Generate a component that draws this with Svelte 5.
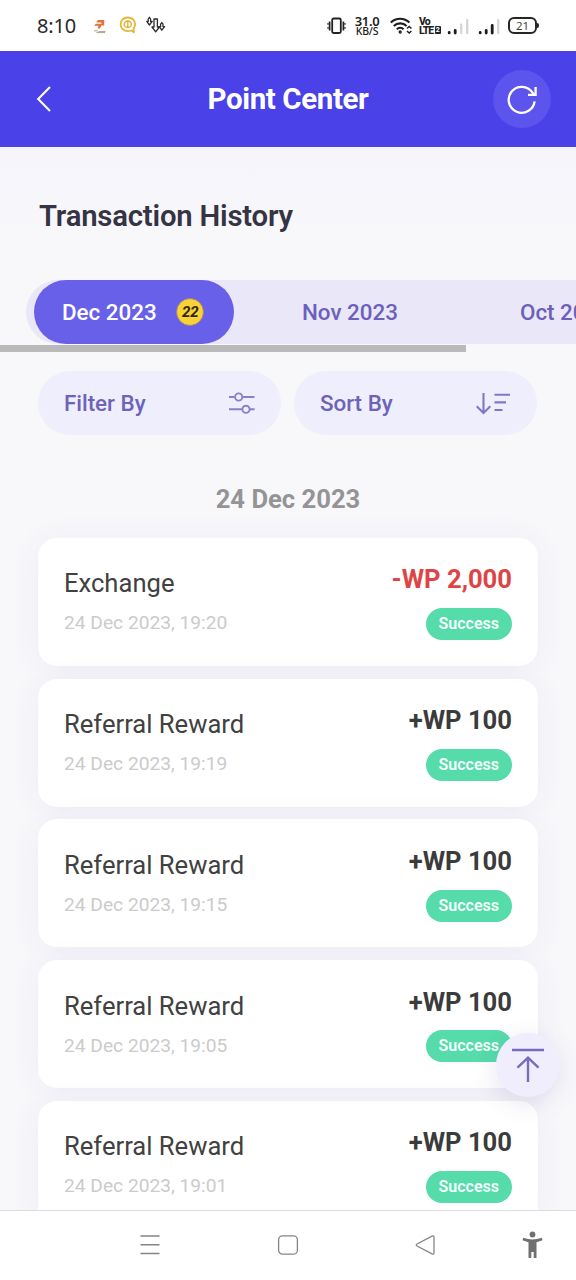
<script>
  const months = [
    { label: 'Dec 2023', count: 22, active: true },
    { label: 'Nov 2023' },
    { label: 'Oct 2023' }
  ];
  const transactions = [
    { name: 'Exchange', time: '24 Dec 2023, 19:20', amount: '-WP 2,000', debit: true },
    { name: 'Referral Reward', time: '24 Dec 2023, 19:19', amount: '+WP 100' },
    { name: 'Referral Reward', time: '24 Dec 2023, 19:15', amount: '+WP 100' },
    { name: 'Referral Reward', time: '24 Dec 2023, 19:05', amount: '+WP 100' },
    { name: 'Referral Reward', time: '24 Dec 2023, 19:01', amount: '+WP 100' }
  ];
</script>

<div class="screen">
  <div class="status">
    <div class="status-left">
      <span class="clock">8:10</span>
      <svg class="app-note" width="14" height="16" viewBox="0 0 14 16">
        <path d="M3.6 2.6 5 1h6.2v5.6H8.6L6.8 9.6H4.6l.8-2.8H1.2l1.4-2h5.8V3.4H3.6z" fill="#e0763d" />
        <path d="M1.2 11.8h3.6M5.5 12.6h7M3.5 13.6h8.5" stroke="#b39f8b" stroke-width="1" fill="none" />
      </svg>
      <svg class="chat" width="18" height="18" viewBox="0 0 18 18">
        <path d="M12.6 14.5Q11 15.2 8.8 15.2C4.6 15.2 1.6 12.2 1.6 8.3S4.6 1.5 8.8 1.5s7.3 2.9 7.3 6.8q0 2-1.3 3.8v4.2z" fill="none" stroke="#e6b532" stroke-width="1.8" stroke-linejoin="round" />
        <ellipse cx="8.8" cy="8.2" rx="3.6" ry="3.2" fill="none" stroke="#e2ac2c" stroke-width="1.4" />
        <path d="M8.8 5v6.4" stroke="#e2ac2c" stroke-width="1.3" />
      </svg>
      <svg class="arrows" width="20" height="18" viewBox="0 0 20 18" fill="#fff" stroke="#2c2c2c" stroke-width="1.3" stroke-linejoin="round">
        <path d="M8 3h3.4v8h2L9.7 15.8 6 11h2z" />
        <path d="M2.2 5.4V3L3.4 1.3 4.6 3v2.4h1.6L3.4 9 .8 5.4z" />
        <path d="M14.6 10.6V8.2l1.2-1.7L17 8.2v2.4h1.6l-2.8 3.6-2.6-3.6z" />
      </svg>
    </div>
    <div class="status-right">
      <svg class="vibrate" width="19" height="18" viewBox="0 0 19 18" fill="none" stroke="#222">
        <rect x="5.2" y="1.5" width="8.6" height="14.5" rx="1.5" stroke-width="1.8" />
        <path d="M2.6 4.5v9M16.4 4.5v9" stroke-width="1.7" />
        <path d="M1 6v1.8M1 10v1.8M18 6v1.8M18 10v1.8" stroke-width="1.2" />
      </svg>
      <span class="speed"><b>31.0</b><small>KB/S</small></span>
      <svg class="wifi" width="24" height="18" viewBox="0 0 24 18" fill="none" stroke="#1c1c1c" stroke-width="2.1">
        <path d="M.8 5.6a13.2 13.2 0 0 1 18.6 0M3.8 9a9 9 0 0 1 12.8 0M6.8 12.2a5 5 0 0 1 6.8 0" />
        <circle cx="10.2" cy="15" r="1" stroke-width="1.3" />
        <path d="m17 11.6 2.2-2.1 2.2 2.1M17 14l2.2 2.1 2.2-2.1" stroke-width="1.4" />
      </svg>
      <span class="volte"><b>Vo</b><b>LTE<i>2</i></b></span>
      <svg class="bars" width="22" height="18" viewBox="0 0 22 18" stroke-width="2.8" stroke-linecap="round">
        <path d="M2.2 14.5v.4M8.2 12.3v2.8" stroke="#1c1c1c" />
        <path d="M14.2 6.8v8.3M20.2 2.3v12.8" stroke="#d6d6d6" stroke-width="2.4" />
      </svg>
      <svg class="bars last" width="22" height="18" viewBox="0 0 22 18" stroke-width="2.8" stroke-linecap="round">
        <path d="M2.2 14.5v.4M8.2 12.3v2.8M14.2 7.3v7.8" stroke="#1c1c1c" />
        <path d="M20.2 2.3v12.8" stroke="#d6d6d6" stroke-width="2.4" />
      </svg>
      <span class="battery">21</span>
    </div>
  </div>

  <header>
    <svg class="back" width="16" height="28" viewBox="0 0 16 28" fill="none" stroke="#fff" stroke-width="2.1">
      <path d="M14 2 2.2 14 14 26" />
    </svg>
    <h1>Point Center</h1>
    <button class="refresh" aria-label="Refresh">
      <svg width="32" height="32" viewBox="0 0 32 32" fill="none" stroke="#fff" stroke-width="2.3">
        <path d="M28.6 18.4A13 13 0 1 1 26.4 9.4l1.4 1.8" />
        <path d="M22 11.8h7.6V4" />
      </svg>
    </button>
  </header>

  <main>
    <h2>Transaction History</h2>

    <div class="months">
      {#each months as month}
        <div class="month" class:active={month.active}>
          <span>{month.label}</span>
          {#if month.count}<em>{month.count}</em>{/if}
        </div>
      {/each}
    </div>
    <div class="scrollbar"></div>

    <div class="controls">
      <button>
        <span>Filter By</span>
        <svg width="28" height="26" viewBox="0 0 28 26" fill="none" stroke="#8980c8" stroke-width="1.9">
          <path d="M1 7h5.5M14.5 7h12M1 19.3h13M21.6 19.3h5" />
          <circle cx="10.7" cy="7" r="3.6" /><circle cx="18" cy="19.3" r="3.6" />
        </svg>
      </button>
      <button>
        <span>Sort By</span>
        <svg width="36" height="26" viewBox="0 0 36 26" fill="none" stroke="#8178c5" stroke-width="2.1">
          <path d="M7.5 3v20M.7 16.3l6.8 6.7 6.8-6.7M18.5 4.7H34M18.5 12.4H30M18.5 20H26.5" />
        </svg>
      </button>
    </div>

    <h3>24 Dec 2023</h3>

    <div class="list">
      {#each transactions as item}
        <article>
          <div class="detail">
            <span class="name">{item.name}</span>
            <span class="time">{item.time}</span>
          </div>
          <div class="result">
            <strong class:debit={item.debit}>{item.amount}</strong>
            <span class="badge">Success</span>
          </div>
        </article>
      {/each}
    </div>
  </main>

  <button class="to-top" aria-label="Back to top">
    <svg width="34" height="36" viewBox="0 0 34 36" fill="none" stroke="#776abf" stroke-width="2.4">
      <path d="M1 3h32M17 35V11M6.5 20.7 17 10.7l10.5 10" />
    </svg>
  </button>

  <nav>
    <svg width="22" height="22" viewBox="0 0 22 22" stroke="#858585" stroke-width="1.4"><path d="M1.5 2h19M1.5 10.8h19M1.5 19.5h19" /></svg>
    <svg width="22" height="22" viewBox="0 0 22 22" fill="none" stroke="#858585" stroke-width="1.3"><rect x="1.6" y="1.8" width="18.8" height="18.4" rx="4" /></svg>
    <svg width="22" height="22" viewBox="0 0 22 22" fill="none" stroke="#858585" stroke-width="1.3"><path d="M17.1 2.1Q19 1.3 19 3.5v15q0 2.2-1.9 1.4L2 12Q.5 10.9 2 10z" /></svg>
    <svg class="person" width="22" height="28" viewBox="0 0 22 28" fill="#707070">
      <circle cx="10.5" cy="3.5" r="2.9" />
      <path d="M1.2 6.8Q10.5 10 19.8 6.8l.7 2.4-6 2V27h-2.8v-6H9.3v6H6.5V11.2l-6-2z" />
    </svg>
  </nav>
</div>

<style>
  :global(body) { margin: 0; overflow: hidden; }
  * { box-sizing: border-box; }
  .screen {
    position: relative; width: 576px; height: 1280px; overflow: hidden;
    display: flex; flex-direction: column;
    background: #f8f8fb; font-family: Roboto, sans-serif;
  }
  svg { flex: none; display: block; }
  button { border: 0; margin: 0; padding: 0; font: inherit; }
  h1, h2, h3 { margin: 0; }

  .status { height: 51px; flex: none; background: #fff; display: flex; justify-content: space-between; padding: 0 37px; }
  .status-left, .status-right { display: flex; align-items: center; }
  .clock { font: 20px/50px "Noto Sans", sans-serif; color: #282828; width: 56px; letter-spacing: -.2px; white-space: nowrap; }
  .app-note { margin-top: 2px; }
  .chat { margin-left: 12px; margin-top: -1px; }
  .arrows { margin-left: 9px; margin-top: -2px; }
  .speed { display: flex; flex-direction: column; align-items: center; width: 26px; margin-left: 8px; margin-top: 1px; font-family: "Noto Sans", sans-serif; color: #222; white-space: nowrap; }
  .speed b { font-size: 13px; line-height: 10px; font-weight: 600; letter-spacing: -.3px; }
  .speed small { font-size: 10.5px; line-height: 10px; font-weight: 500; letter-spacing: -.2px; }
  .wifi { margin-left: 10px; }
  .volte { display: flex; flex-direction: column; width: 21px; margin-left: 5px; color: #222; font-family: Roboto, sans-serif; font-size: 10.5px; line-height: 9px; letter-spacing: -.9px; }
  .volte b { display: flex; align-items: center; height: 9px; font-weight: 800; }
  .volte i { font-style: normal; font-size: 7px; line-height: 8px; letter-spacing: 0; background: #222; color: #fff; padding: 0 1px; margin-left: 1.5px; border-radius: 1px; height: 8px; }
  .bars { margin-left: 7px; margin-top: 2px; }
  .bars.last { margin-left: 9px; }
  .battery {
    position: relative; width: 29px; height: 17px; margin: 0 2px 0 8px; border: 2px solid #262626; border-radius: 6px;
    font: 11.5px/13px "Noto Sans", sans-serif; color: #444; text-align: center;
  }
  .battery::after { content: ""; position: absolute; right: -4px; top: 4px; width: 2px; height: 5px; background: #262626; border-radius: 0 2px 2px 0; }

  header { height: 96px; flex: none; background: #4a41e9; display: grid; grid-template-columns: 58px 1fr 58px; align-items: center; padding: 0 25px 0 25px; }
  .back { margin-left: 11px; }
  h1 { color: #fff; font-size: 29.5px; line-height: 34px; font-weight: 700; text-align: center; letter-spacing: -.4px; }
  .refresh { width: 58px; height: 58px; border-radius: 50%; background: #5d54ee; display: grid; place-items: center; }

  main { flex: 1; min-height: 0; overflow: hidden; display: flex; flex-direction: column; background: linear-gradient(#f5f4fb 0, #f8f8fb 90px); }
  h2 { margin: 52px 0 0 39px; font-size: 29.3px; line-height: 34px; font-weight: 600; letter-spacing: -.2px; color: #353344; }
  .months { flex: none; width: 800px; height: 64px; margin: 47px 0 0 26px; padding-left: 8px; border-radius: 32px; background: #eae8f8; display: flex; }
  .month { width: 232px; display: flex; align-items: center; justify-content: center; font-size: 22.4px; font-weight: 500; color: #6c60bd; line-height: 64px; }
  .month.active { width: 200px; border-radius: 32px; background: #6860e9; color: #fff; justify-content: flex-start; padding-left: 28px; }
  .month:last-child { margin-left: -14px; margin-right: 4px; width: 227px; }
  em { width: 28px; height: 28px; margin-left: 19.5px; border: 1px solid #a67d82; border-radius: 50%; background: #f9d335; color: #302813; font-size: 15px; line-height: 26px; font-weight: 700; text-align: center; }
  .scrollbar { flex: none; width: 466px; height: 7px; margin-top: 1px; background: #b9b9b9; }
  .controls { flex: none; display: grid; grid-template-columns: 243px 243px; gap: 13px; margin: 19px 0 0 38.4px; height: 64px; }
  .controls button { display: flex; align-items: center; justify-content: space-between; border-radius: 32px; padding: 0 25px 0 25.5px; background: #efeefd; color: #6d63b8; font-size: 22.4px; font-weight: 500; }
  h3 { flex: none; margin-top: 49px; text-align: center; font-size: 25.6px; line-height: 30px; font-weight: 700; color: #949496; letter-spacing: 0; }
  .list { flex: none; display: flex; flex-direction: column; gap: 12.8px; padding: 23.8px 38.4px; }
  article { flex: none; width: 499.2px; height: 128px; border-radius: 19px; background: #fff; display: flex; justify-content: space-between; padding: 0 25.6px; box-shadow: 0 2px 30px rgba(75, 65, 150, .065); }
  .detail, .result { display: flex; flex-direction: column; }
  .result { align-items: flex-end; }
  .name { margin-top: 29.5px; font-size: 25.6px; line-height: 32px; color: #414141; white-space: nowrap; }
  .time { margin-top: 12px; font-size: 19.2px; line-height: 24px; color: #cbcbcb; white-space: nowrap; }
  strong { margin-top: 25.4px; font-size: 25.6px; line-height: 32px; font-weight: 700; color: #3b3b3b; white-space: nowrap; }
  strong.debit { color: #de4446; }
  .badge { margin-top: 12.8px; width: 86.4px; height: 32px; border-radius: 16px; background: #56dbab; color: #f4fffb; font-size: 16px; line-height: 32px; font-weight: 600; text-align: center; }

  .to-top { position: absolute; left: 496px; top: 1033px; width: 64px; height: 64px; border-radius: 50%; background: #f0eefd; display: grid; place-items: center; box-shadow: 0 6px 24px rgba(80, 72, 150, .14); }

  nav { position: relative; flex: none; height: 70px; border-top: 1px solid #dcdcdc; background: #fff; display: flex; align-items: center; padding: 0 0 2px 139px; gap: 116px; }
  nav .person { margin-left: -31px; }
</style>
